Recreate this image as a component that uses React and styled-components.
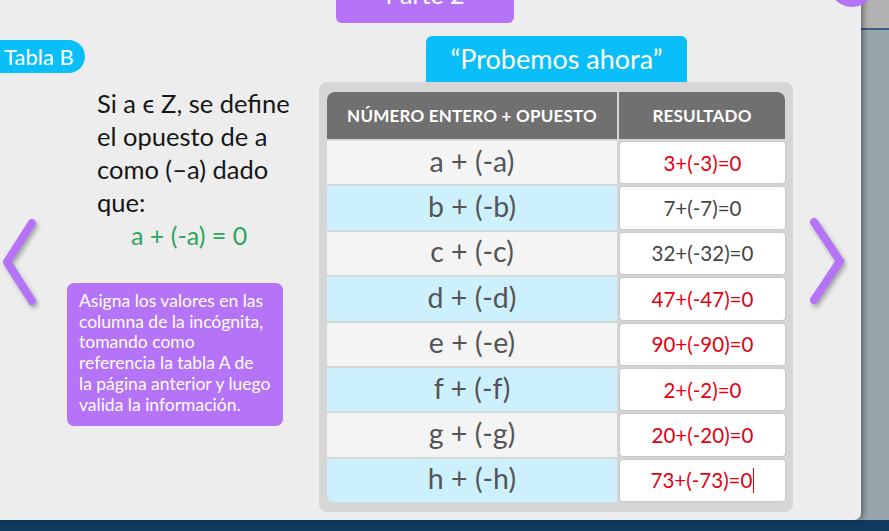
import React from "react";
import styled, { createGlobalStyle } from "styled-components";

const GlobalStyle = createGlobalStyle`
  html, body {
    margin: 0;
    padding: 0;
    background: #97a4ac;
    overflow: hidden;
  }
  body {
    font-family: Lato, "Open Sans", sans-serif;
  }
`;

const Screen = styled.div`
  position: relative;
  width: 889px;
  height: 531px;
  overflow: hidden;
  display: grid;
  grid-template-columns: 861px 1fr;
  grid-template-rows: 520px 1fr;
`;
const Side = styled.div`
  background: linear-gradient(#b2b2b2 0 28px, #3c5f80 28px 30px, #97a4ac 30px);
`;
const BottomBar = styled.div`
  grid-column: 1 / -1;
  background: #0e3a5f;
`;
const Bubble = styled.div`
  position: absolute;
  z-index: 2;
  left: 829px;
  top: -39px;
  width: 46px;
  height: 46px;
  border-radius: 50%;
  background: #b574f7;
`;
const Panel = styled.main`
  position: relative;
  z-index: 1;
  background: #ededed;
  border-bottom-right-radius: 7px;
  box-shadow: 3px 0 5px rgba(0, 0, 0, 0.35);
  display: grid;
  grid-template-columns: 319px 474px 1fr;
  grid-template-rows: 23px 1fr;
`;
const Header = styled.header`
  grid-column: 1 / -1;
  display: flex;
  align-items: flex-end;
  padding-left: 336px;
`;
const PartButton = styled.div`
  width: 178px;
  height: 41px;
  margin-top: -18px;
  border-radius: 0 0 6px 6px;
  background: #b574f7;
  color: #fff;
  font-size: 25px;
  line-height: 1;
  display: flex;
  justify-content: center;
  align-items: flex-start;
  overflow: hidden;
`;

const LeftCol = styled.section`
  padding-top: 17px;
  display: flex;
  flex-direction: column;
  align-items: flex-start;
`;
const Pill = styled.div`
  width: 81px;
  height: 33px;
  padding-left: 4px;
  border-radius: 0 17px 17px 0;
  background: #0abef9;
  color: #fff;
  font-size: 22px;
  line-height: 33px;
`;
const Definition = styled.p`
  margin: 14px 0 0 97px;
  font-size: 25.5px;
  line-height: 33px;
  color: #161616;
  white-space: nowrap;
`;
const Formula = styled.span`
  display: block;
  padding-left: 34px;
  color: #2aa85e;
  font-size: 25px;
`;
const Note = styled.div`
  box-sizing: border-box;
  width: 216px;
  height: 143px;
  margin: 31px 0 0 67px;
  padding: 8px 6px 0 12px;
  border-radius: 7px;
  background: #b574f7;
  color: #fff;
  font-size: 17.5px;
  line-height: 20.7px;
  white-space: nowrap;
`;

const MidCol = styled.section`
  display: flex;
  flex-direction: column;
  align-items: flex-start;
  padding-top: 13px;
`;
const Tab = styled.div`
  width: 261px;
  height: 46px;
  margin-left: 107px;
  border-radius: 6px 6px 0 0;
  background: #0abef9;
  color: #fff;
  font-size: 27px;
  line-height: 46px;
  text-align: center;
`;
const TableBox = styled.div`
  box-sizing: border-box;
  width: 474px;
  height: 430px;
  padding: 10px 8px;
  border-radius: 8px;
  background: #d6d6d6;
  display: grid;
  grid-template-columns: 290px 1fr;
  grid-template-rows: 47px repeat(8, 1fr);
  column-gap: 2px;
  row-gap: 2px;
`;
const HeadCell = styled.div`
  background: #707070;
  color: #fff;
  font-weight: 700;
  font-size: 17px;
  letter-spacing: 0.2px;
  display: flex;
  align-items: center;
  justify-content: center;
  border-radius: ${(p) => (p.$first ? "8px 0 0 0" : "0 8px 0 0")};
`;
const TermCell = styled.div`
  background: ${(p) => (p.$alt ? "#cdf0fd" : "#f4f4f4")};
  color: #555;
  font-size: 28.5px;
  display: flex;
  align-items: center;
  justify-content: center;
  padding-bottom: 4px;
  border-bottom-left-radius: ${(p) => (p.$last ? "6px" : "0")};
`;
const ResultCell = styled.div`
  margin: 1px 0 1px 1px;
  background: #fff;
  border-radius: 3px;
  box-shadow: 0 0 2px rgba(0, 0, 0, 0.22);
  color: ${(p) => (p.$ok ? "#444" : "#e3000f")};
  font-size: 20.5px;
  display: flex;
  align-items: center;
  justify-content: center;
`;
const Caret = styled.span`
  display: inline-block;
  width: 1px;
  height: 25px;
  margin-left: 1px;
  background: #e3000f;
`;

const NavArrow = styled.svg`
  position: absolute;
  top: ${(p) => p.$top}px;
  left: ${(p) => p.$left}px;
  filter: drop-shadow(2px 3px 2px rgba(0, 0, 0, 0.3));
`;

const rows = [
  ["a", "3+(-3)=0", false],
  ["b", "7+(-7)=0", true],
  ["c", "32+(-32)=0", true],
  ["d", "47+(-47)=0", false],
  ["e", "90+(-90)=0", false],
  ["f", "2+(-2)=0", false],
  ["g", "20+(-20)=0", false],
  ["h", "73+(-73)=0", false],
];

const Chevron = ({ dir, left, top }) => (
  <NavArrow $left={left} $top={top} width="40" height="92" viewBox="0 0 40 92">
    <polyline
      points={dir === "left" ? "30,6 5,45 30,84" : "8,6 34,45 8,84"}
      fill="none"
      stroke="#b574f7"
      strokeWidth="8"
      strokeLinecap="round"
      strokeLinejoin="round"
    />
  </NavArrow>
);

export default function App() {
  return (
    <>
      <GlobalStyle />
      <Screen>
        <Panel>
          <Header>
            <PartButton>Parte 2</PartButton>
          </Header>
          <LeftCol>
            <Pill>Tabla B</Pill>
            <Definition>
              Si a ϵ Z, se define
              <br />
              el opuesto de a
              <br />
              como (–a) dado
              <br />
              que:
              <Formula>a + (-a) = 0</Formula>
            </Definition>
            <Note>
              Asigna los valores en las
              <br />
              columna de la incógnita,
              <br />
              tomando como
              <br />
              referencia la tabla A de
              <br />
              la página anterior y luego
              <br />
              valida la información.
            </Note>
          </LeftCol>
          <MidCol>
            <Tab>“Probemos ahora”</Tab>
            <TableBox>
              <HeadCell $first>NÚMERO ENTERO + OPUESTO</HeadCell>
              <HeadCell>RESULTADO</HeadCell>
              {rows.map(([v, res, ok], i) => (
                <React.Fragment key={v}>
                  <TermCell $alt={i % 2 === 1} $last={i === rows.length - 1}>
                    {v} + (-{v})
                  </TermCell>
                  <ResultCell $ok={ok}>
                    {res}
                    {i === rows.length - 1 && <Caret />}
                  </ResultCell>
                </React.Fragment>
              ))}
            </TableBox>
          </MidCol>
          <div />
          <Chevron dir="left" left={2} top={217} />
          <Chevron dir="right" left={806} top={216} />
        </Panel>
        <Side />
        <BottomBar />
        <Bubble />
      </Screen>
    </>
  );
}
